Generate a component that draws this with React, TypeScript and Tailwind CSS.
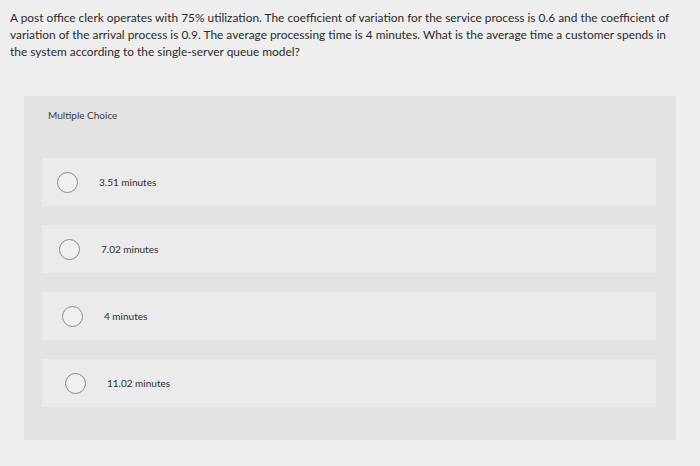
import React from 'react';

const options = [
  { label: '3.51 minutes', pad: 'pl-[15px]' },
  { label: '7.02 minutes', pad: 'pl-[17px]' },
  { label: '4 minutes', pad: 'pl-[20px]' },
  { label: '11.02 minutes', pad: 'pl-[23px]' },
];

const Radio = () => (
  <span className="block w-[21px] h-[21px] rounded-full border-[1.5px] border-[#8a8a8a] bg-[#f0f0f0] shrink-0" />
);

export default function App() {
  return (
    <div
      className="w-[700px] h-[466px] bg-[#eeeeee] text-[#2b2b2b] overflow-hidden"
      style={{ fontFamily: 'Lato, "Open Sans", sans-serif' }}
    >
      <p className="pl-[10px] pt-[9px] text-[11.9px] leading-[17px] whitespace-nowrap">
        A post office clerk operates with 75% utilization. The coefficient of variation for the service process is 0.6 and the coefficient of
        <br />
        variation of the arrival process is 0.9. The average processing time is 4 minutes. What is the average time a customer spends in
        <br />
        the system according to the single-server queue model?
      </p>

      <div className="mt-[36px] ml-[24px] mr-[24px] h-[344px] bg-[#e3e3e3] flex flex-col">
        <div className="h-[38px] pl-[24px] pt-[12px] text-[10px] text-[#3a3a3a]">Multiple Choice</div>
        <div className="flex flex-col gap-[19px] pt-[24px] pl-[18px] pr-[20px]">
          {options.map((o) => (
            <div key={o.label} className={`h-[48px] bg-[#ebebeb] flex items-center gap-[21px] ${o.pad}`}>
              <Radio />
              <span className="text-[10px] text-[#2e2e2e]">{o.label}</span>
            </div>
          ))}
        </div>
      </div>
    </div>
  );
}
